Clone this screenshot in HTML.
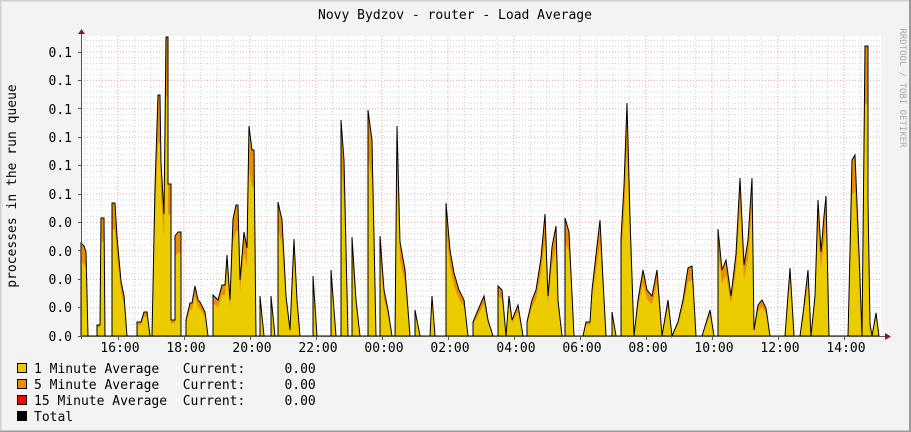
<!DOCTYPE html>
<html><head><meta charset="utf-8"><style>
html,body{margin:0;padding:0;background:#f3f3f3;}
svg{display:block;}
text{font-family:"DejaVu Sans Mono","Liberation Mono",monospace;white-space:pre;}
</style></head><body>
<svg width="911" height="432" viewBox="0 0 911 432" xmlns="http://www.w3.org/2000/svg">
<rect x="0" y="0" width="911" height="432" fill="#f3f3f3"/>
<path d="M0.5 431V0.5H910" stroke="#cfcfcf" fill="none" stroke-width="2"/>
<path d="M910 0V431.5H0" stroke="#9a9a9a" fill="none" stroke-width="2"/>
<rect x="81" y="36" width="800" height="300" fill="#ffffff"/>
<defs>
<polygon id="d" points="81,336 81,243 84,246 86,252 88,336 97,336 97,325 100,325 101,218 104,218 105,336 112,336 112,203 115,203 117,237 121,281 124,296 127,336 137,336 137,322 141,322 144,312 147,312 150,336 152,336 155,187 158,95 160,95 161,163 164,214 166,37 168,37 168,184 171,184 171,320 175,320 175,236 178,232 181,232 181,336 186,336 186,320 190,303 192,303 195,286 198,300 200,302 205,312 208,336 213,336 213,295 218,300 222,285 225,285 227,255 230,300 233,219 236,205 238,205 240,280 244,232 247,248 249,126 252,150 254,150 256,336 260,336 260,296 264,336 271,336 271,296 275,336 278,336 278,202 282,220 286,296 290,330 294,239 297,300 300,336 313,336 313,276 317,336 331,336 331,270 336,336 341,336 341,120 344,160 348,336 352,336 352,237 356,300 360,336 368,336 368,110 372,140 376,336 380,336 380,236 384,290 388,310 392,336 395,336 397,126 400,242 405,270 410,336 415,336 415,310 420,336 430,336 432,296 435,336 446,336 446,203 450,250 454,273 459,290 464,300 468,336 473,336 473,322 478,310 484,296 488,320 493,336 498,336 498,286 502,290 506,336 509,296 512,320 518,305 523,336 527,336 527,322 532,300 536,290 541,258 545,214 548,296 552,247 556,226 558,300 562,336 565,336 565,218 569,232 574,336 583,336 586,322 590,322 592,290 597,246 600,220 603,280 606,336 612,336 612,312 616,336 621,336 621,238 624,186 627,103 630,218 634,336 638,300 643,270 647,290 652,296 657,270 662,336 668,300 672,336 678,322 683,300 688,268 692,266 696,336 702,336 710,310 714,336 718,336 718,229 722,270 726,260 731,296 736,254 740,178 744,265 748,240 752,178 754,330 758,305 762,300 766,308 770,336 785,336 790,268 794,336 800,336 803,314 808,270 811,336 815,296 818,200 821,252 824,216 826,196 829,336 848,336 850,252 852,160 855,155 859,252 862,336 865,46 868,46 868,200 870,324 872,336 876,313 879,336"/>
</defs>
<g stroke-width="1" stroke-dasharray="1,2" fill="none">
<path stroke="#d4d4d4" d="M81 330.3H881M81 324.6H881M81 319H881M81 313.3H881M81 301.9H881M81 296.2H881M81 290.6H881M81 284.9H881M81 273.5H881M81 267.8H881M81 262.2H881M81 256.5H881M81 245.1H881M81 239.4H881M81 233.8H881M81 228.1H881M81 216.7H881M81 211H881M81 205.4H881M81 199.7H881M81 188.3H881M81 182.6H881M81 177H881M81 171.3H881M81 159.9H881M81 154.2H881M81 148.6H881M81 142.9H881M81 131.5H881M81 125.8H881M81 120.2H881M81 114.5H881M81 103.1H881M81 97.4H881M81 91.8H881M81 86.1H881M81 74.7H881M81 69H881M81 63.4H881M81 57.7H881M81 46.3H881M81 40.6H881
M85 36V336M101.5 36V336M134.5 36V336M151 36V336M167.5 36V336M200.5 36V336M217 36V336M233.5 36V336M266.5 36V336M283 36V336M299.5 36V336M332.5 36V336M349 36V336M365.5 36V336M398.5 36V336M415 36V336M431.5 36V336M464.5 36V336M481 36V336M497.5 36V336M530.5 36V336M547 36V336M563.5 36V336M596.5 36V336M613 36V336M629.5 36V336M662.5 36V336M679 36V336M695.5 36V336M728.5 36V336M745 36V336M761.5 36V336M794.5 36V336M811 36V336M827.5 36V336M860.5 36V336M877 36V336"/>
<path stroke="#f0a0a0" d="M81 307.6H881M81 279.2H881M81 250.8H881M81 222.4H881M81 194H881M81 165.6H881M81 137.2H881M81 108.8H881M81 80.4H881M81 52H881
M118 36V336M184 36V336M250 36V336M316 36V336M382 36V336M448 36V336M514 36V336M580 36V336M646 36V336M712 36V336M778 36V336M844 36V336"/>
</g>
<use href="#d" fill="#ea8f00"/>
<use href="#d" fill="#eacc00" transform="translate(0,67.2) scale(1,0.8)"/>
<use href="#d" fill="none" stroke="#000" stroke-width="1"/>
<g stroke="#555" stroke-width="1">
<path d="M81.5 32V339M78 336.5H888"/>
<path d="M78 52.5H81M78 80.5H81M78 108.5H81M78 137.5H81M78 165.5H81M78 194.5H81M78 222.5H81M78 250.5H81M78 279.5H81M78 307.5H81"/>
<path d="M118.5 336V340M184.5 336V340M250.5 336V340M316.5 336V340M382.5 336V340M448.5 336V340M514.5 336V340M580.5 336V340M646.5 336V340M712.5 336V340M778.5 336V340M844.5 336V340"/>
</g>
<polygon points="78,34 81.5,29 85,34" fill="#8b1a1a"/>
<polygon points="885,333 891,336.5 885,340" fill="#8b1a1a"/>
<text x="455" y="19" font-size="13" text-anchor="middle" fill="#000">Novy Bydzov - router - Load Average</text>
<g font-size="13" fill="#000" text-anchor="end">
<text x="72" y="57">0.1</text><text x="72" y="85">0.1</text><text x="72" y="114">0.1</text><text x="72" y="142">0.1</text><text x="72" y="170">0.1</text><text x="72" y="199">0.1</text><text x="72" y="227">0.0</text><text x="72" y="256">0.0</text><text x="72" y="284">0.0</text><text x="72" y="312">0.0</text><text x="72" y="341">0.0</text>
</g>
<g font-size="13" fill="#000" text-anchor="middle">
<text x="120" y="352">16:00</text><text x="186" y="352">18:00</text><text x="252" y="352">20:00</text><text x="318" y="352">22:00</text><text x="384" y="352">00:00</text><text x="450" y="352">02:00</text><text x="516" y="352">04:00</text><text x="582" y="352">06:00</text><text x="648" y="352">08:00</text><text x="714" y="352">10:00</text><text x="780" y="352">12:00</text><text x="846" y="352">14:00</text>
</g>
<text transform="translate(16,186) rotate(-90)" font-size="13" text-anchor="middle" fill="#000">processes in the run queue</text>
<text transform="translate(900,88) rotate(90)" font-size="9" text-anchor="middle" fill="#aaa">RRDTOOL / TOBI OETIKER</text>
<g font-size="13" fill="#000">
<rect x="17.5" y="363.5" width="9" height="9" fill="#eacc00" stroke="#000"/>
<text x="34" y="373">1 Minute Average   Current:     0.00</text>
<rect x="17.5" y="379.5" width="9" height="9" fill="#ea8f00" stroke="#000"/>
<text x="34" y="389">5 Minute Average   Current:     0.00</text>
<rect x="17.5" y="395.5" width="9" height="9" fill="#ff0000" stroke="#000"/>
<text x="34" y="405">15 Minute Average  Current:     0.00</text>
<rect x="17.5" y="411.5" width="9" height="9" fill="#000" stroke="#000"/>
<text x="34" y="421">Total</text>
</g>
</svg>
</body></html>
